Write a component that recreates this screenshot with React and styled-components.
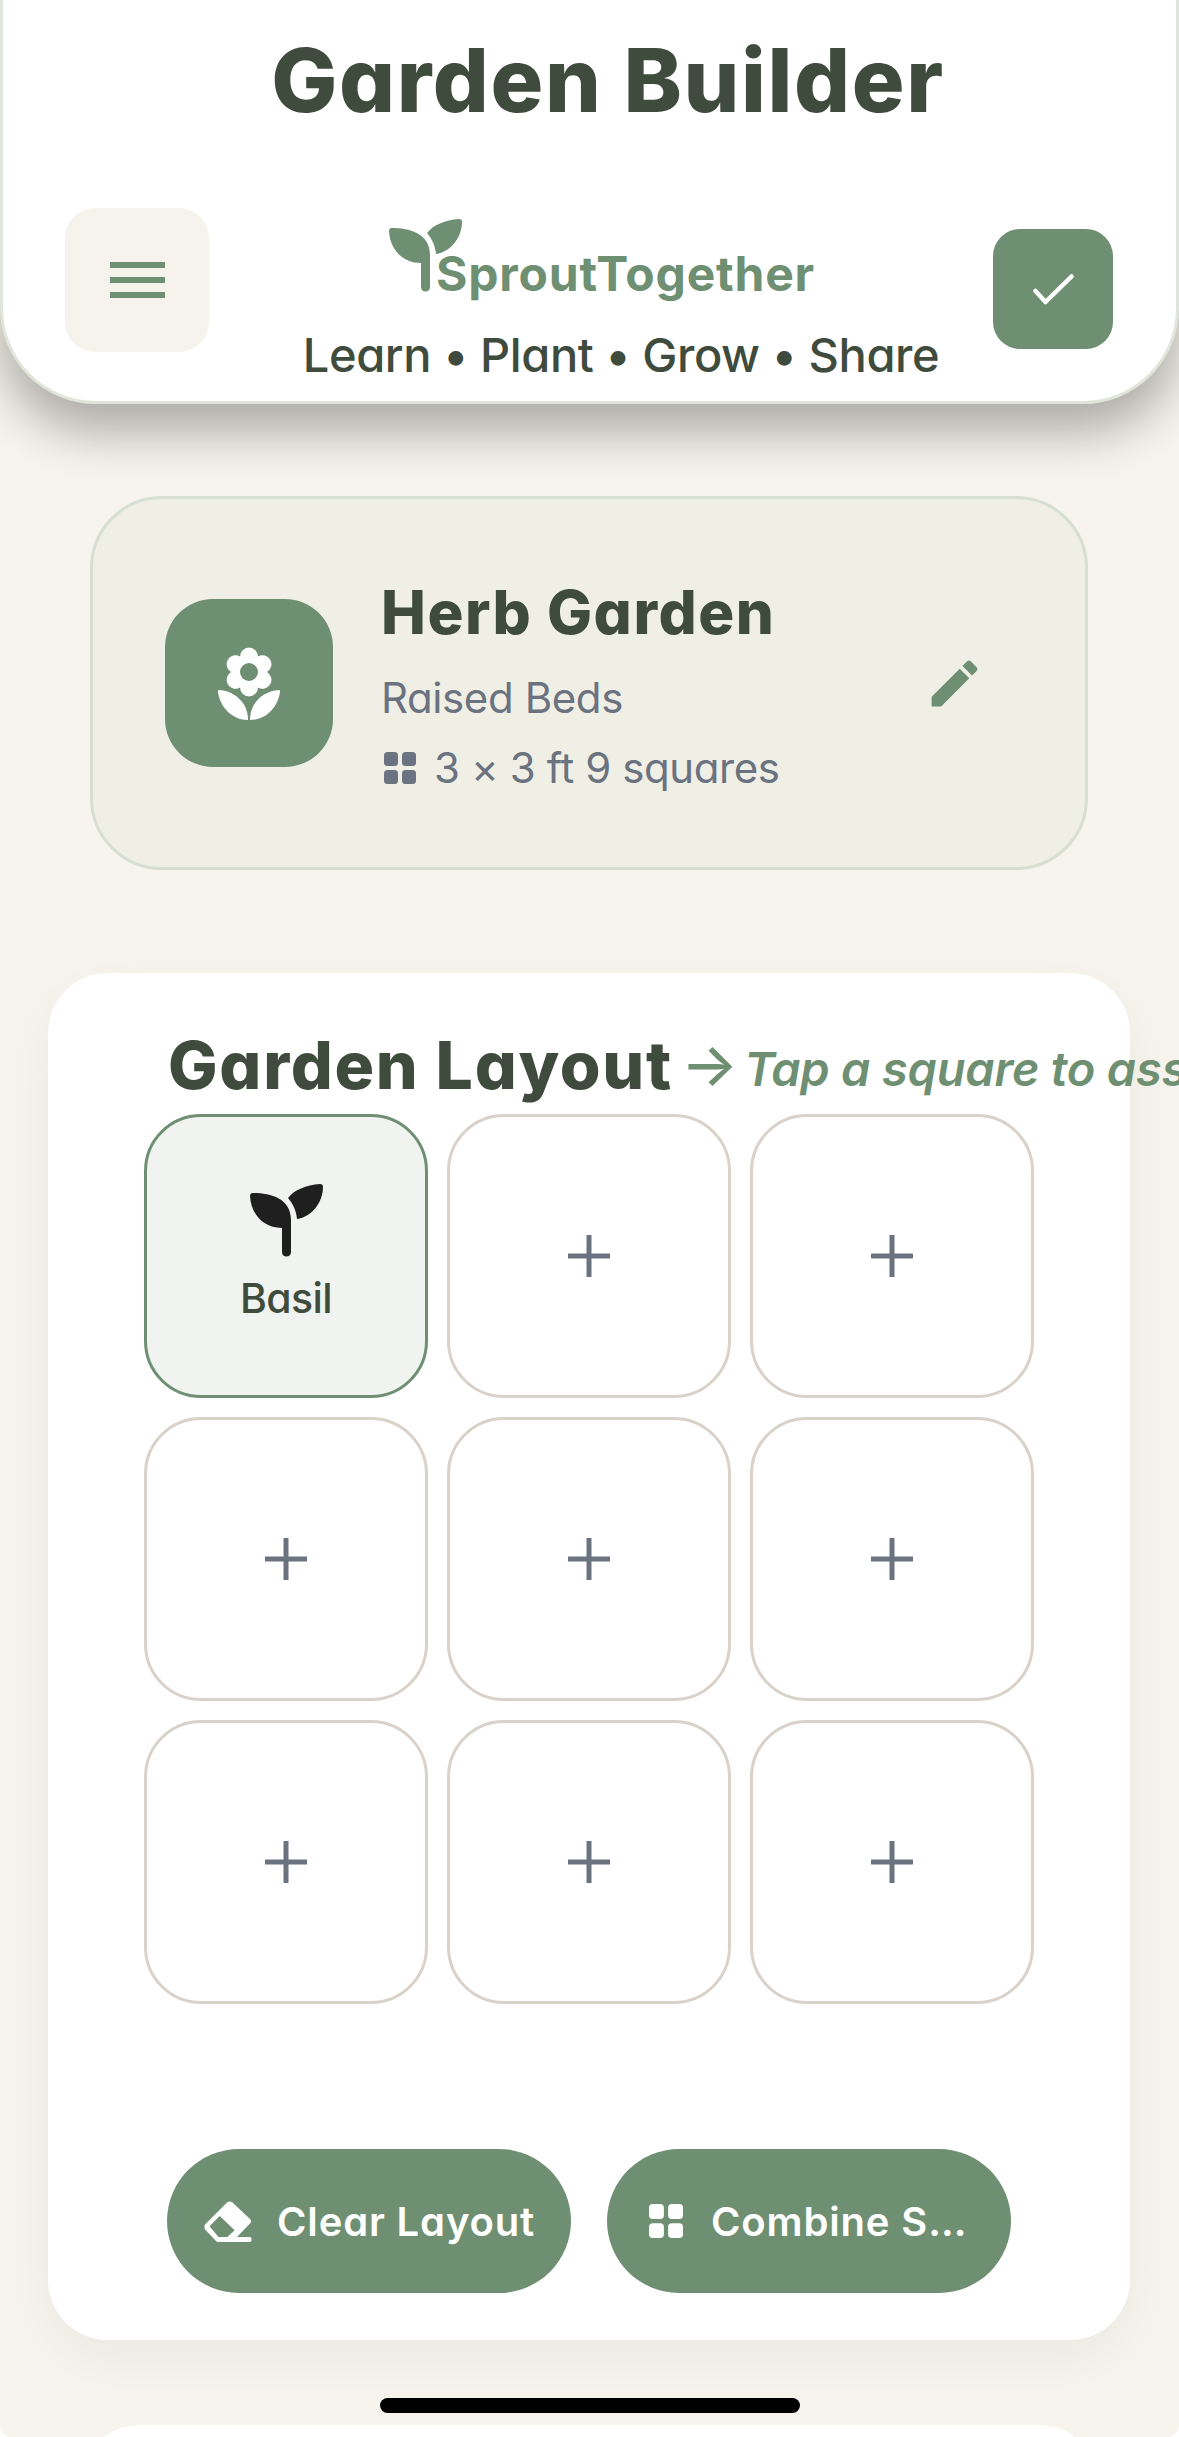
import React from 'react'
import styled, { createGlobalStyle } from 'styled-components'
import { MdEdit } from 'react-icons/md'

const green = '#6f8f72'
const ink = '#3f4b3c'
const grey = '#6b7280'
const paper = '#f7f4ed'

const GlobalStyle = createGlobalStyle`
    html, body {
        margin: 0;
        padding: 0;
        height: 2437px;
        overflow: hidden;
        background: #fff;
    }
    * {
        box-sizing: border-box;
    }
    body {
        font-family: Inter, "Open Sans", sans-serif;
        font-feature-settings: "cv11" 1;
    }
`

const Page = styled.div`
    position: relative;
    width: 1179px;
    height: 2437px;
    overflow: hidden;
    background: ${paper};
    border-radius: 0 0 12px 12px;
`

const Header = styled.header`
    height: 404px;
    background: #fff;
    border: 3px solid #dfe6d9;
    border-top: 0;
    border-radius: 0 0 96px 96px;
    box-shadow: 0 28px 50px rgba(0, 0, 0, 0.3);
    padding: 30px 63px 0 62px;
`

const Title = styled.h1`
    margin: 0;
    height: 100px;
    padding-left: 38px;
    font-size: 88px;
    line-height: 100px;
    font-weight: 800;
    letter-spacing: 1.6px;
    text-align: center;
    white-space: nowrap;
    color: ${ink};
`

const HeaderRow = styled.div`
    display: flex;
    justify-content: space-between;
    align-items: flex-start;
    margin-top: 78px;
`

const MenuButton = styled.button`
    width: 144px;
    height: 144px;
    border: 0;
    border-radius: 30px;
    background: #f6f3ec;
    display: flex;
    flex-direction: column;
    align-items: center;
    justify-content: center;
    gap: 9px;
    padding: 0;
`

const MenuLine = styled.span`
    display: block;
    width: 55px;
    height: 6px;
    background: ${green};
`

const CheckButton = styled.button`
    width: 120px;
    height: 120px;
    margin-top: 21px;
    border: 0;
    border-radius: 27px;
    background: ${green};
    display: flex;
    align-items: center;
    justify-content: center;
    padding: 0;
`

const Brand = styled.div`
    display: flex;
    flex-direction: column;
    align-items: center;
    margin: 11px 0 0 40px;
`

const Logo = styled.div`
    display: flex;
    align-items: flex-start;
    height: 82px;
    margin-right: 38px;
`

const LogoText = styled.span`
    margin: 27px 0 0 -26px;
    font-size: 48px;
    line-height: 56px;
    font-weight: 700;
    letter-spacing: 0.8px;
    color: ${green};
`

const Tagline = styled.div`
    margin-top: 26px;
    font-size: 47px;
    line-height: 56px;
    font-weight: 500;
    letter-spacing: -0.4px;
    white-space: nowrap;
    color: ${ink};
`

const GardenCard = styled.section`
    display: flex;
    align-items: center;
    margin: 92px 91px 0 90px;
    height: 374px;
    padding: 0 72px;
    background: #efefe6;
    border: 3px solid #d7dfd0;
    border-radius: 72px;
`

const IconTile = styled.div`
    flex: none;
    width: 168px;
    height: 168px;
    border-radius: 48px;
    background: ${green};
    display: flex;
    align-items: center;
    justify-content: center;
`

const CardText = styled.div`
    flex: 1;
    margin: 13px 0 0 48px;
`

const CardName = styled.h2`
    margin: 0 0 15px;
    font-size: 60px;
    line-height: 72px;
    font-weight: 800;
    letter-spacing: 1.5px;
    color: ${ink};
`

const CardMeta = styled.div`
    display: flex;
    align-items: center;
    gap: 18px;
    font-size: 42px;
    line-height: 70px;
    letter-spacing: -0.4px;
    color: ${grey};
`

const MetaIcon = styled.span`
    display: flex;
    margin-left: 3px;
`

const EditIcon = styled(MdEdit)`
    flex: none;
    margin-right: 28px;
    color: ${green};
`

const LayoutPanel = styled.section`
    margin: 103px 49px 0 48px;
    height: 1367px;
    padding: 48px 0 0 96px;
    background: #fff;
    border-radius: 60px;
    box-shadow: 0 18px 60px rgba(0, 0, 0, 0.05);
`

const PanelHead = styled.div`
    display: flex;
    align-items: baseline;
    gap: 8px;
    margin-left: 24px;
    height: 93px;
    white-space: nowrap;
`

const PanelTitle = styled.h2`
    margin: 0;
    font-size: 66px;
    line-height: 88px;
    font-weight: 800;
    letter-spacing: 1.7px;
    color: ${ink};
`

const PanelHint = styled.span`
    position: relative;
    top: -3px;
    font-size: 47px;
    font-style: italic;
    font-weight: 600;
    letter-spacing: -0.2px;
    color: ${green};
`

const HintArrow = styled.span`
    margin-right: 6px;
    font-size: 60px;
    line-height: 0;
    font-style: normal;
    font-weight: 500;
`

const SquareGrid = styled.div`
    display: grid;
    grid-template-columns: repeat(3, 284px);
    grid-auto-rows: 284px;
    gap: 19px;
`

const Square = styled.div`
    display: flex;
    flex-direction: column;
    align-items: center;
    justify-content: center;
    padding-bottom: ${p => (p.$filled ? '7px' : '0')};
    border-radius: 57px;
    border: 3px solid ${p => (p.$filled ? green : '#d8d2ca')};
    background: ${p => (p.$filled ? '#f0f3ef' : '#fff')};
`

const PlantName = styled.span`
    margin-top: 18px;
    font-size: 41px;
    line-height: 46px;
    font-weight: 500;
    letter-spacing: -0.6px;
    color: ${ink};
`

const Actions = styled.div`
    display: flex;
    gap: 36px;
    margin: 145px 0 0 23px;
`

const ActionButton = styled.button`
    width: 404px;
    height: 144px;
    padding: 0 30px 0 34px;
    border: 0;
    border-radius: 72px;
    background: ${green};
    color: #fff;
    display: flex;
    align-items: center;
    gap: 22px;
    font-family: inherit;
    font-feature-settings: inherit;
    font-size: 40px;
    font-weight: 600;
    letter-spacing: 0.85px;
`

const CombineButton = styled(ActionButton)`
    padding: 0 40px 0 32px;
    gap: 18px;
`

const ActionIcon = styled.span`
    flex: none;
    width: 54px;
    height: 54px;
    display: flex;
    align-items: center;
    justify-content: center;
`

const ActionLabel = styled.span`
    min-width: 0;
    overflow: hidden;
    text-overflow: ellipsis;
    white-space: nowrap;
`

const NextPanel = styled.section`
    margin: 85px 80px 0;
    height: 200px;
    background: #fff;
    border-radius: 60px;
`

const HomeBar = styled.div`
    position: absolute;
    left: 380px;
    bottom: 24px;
    width: 420px;
    height: 15px;
    border-radius: 8px;
    background: #000;
`

// filled sprout shape, used for the logo and the planted square
function Sprout({ color }) {
    return (
        <svg width="73" height="73" viewBox="0 0 73 73" fill={color}>
            <path d="M3 9C1 9 0 10 0 12 1 30 13 44 32 44V68C32 74 41 74 41 68V36C41 14 20 9 3 9Z" />
            <path d="M38 14C44 6 56 1 70 0 72 0 73 1 73 3 73 18 62 33 47 35 46 26 43 20 38 14Z" />
        </svg>
    )
}

function FlowerIcon() {
    const petals = [0, 60, 120, 180, 240, 300]
    return (
        <svg width="62" height="73" viewBox="0 0 62 73" fill="#fff">
            <circle cx="31" cy="25" r="16" />
            {petals.map(angle => (
                <circle key={angle} cx="31" cy="9.5" r="9" transform={`rotate(${angle} 31 25)`} />
            ))}
            <circle cx="31" cy="25" r="9" fill={green} />
            <path d="M1 43C16 44 30 55 30 73 14 73 2 60 0 45 0 44 0 43 1 43Z" />
            <path d="M61 43C46 44 32 55 32 73 48 73 60 60 62 45 62 44 62 43 61 43Z" />
        </svg>
    )
}

function SquaresIcon({ size }) {
    return (
        <svg width={size} height={size} viewBox="0 0 32 32" fill="currentColor">
            <rect x="0" y="0" width="14" height="14" rx="3.5" />
            <rect x="18" y="0" width="14" height="14" rx="3.5" />
            <rect x="0" y="18" width="14" height="14" rx="3.5" />
            <rect x="18" y="18" width="14" height="14" rx="3.5" />
        </svg>
    )
}

function PlusIcon() {
    return (
        <svg width="42" height="42" viewBox="0 0 42 42" fill={grey}>
            <rect x="18.5" y="0" width="5" height="42" />
            <rect x="0" y="18.5" width="42" height="5" />
        </svg>
    )
}

function EraserIcon() {
    return (
        <svg width="48" height="41" viewBox="0 0 48 41" fill="#fff">
            <path
                fillRule="evenodd"
                d="M23 1.5C24.5 0 27 0 28.5 1.5L46 18C47.5 19.5 47.5 21 46 22.5L33 36H46C48 36 48 41 46 41H15C13.5 41 12.5 40.5 11.5 39.5L1.5 29C0 27.5 0 24.5 1.5 23ZM5.5 25.3 14.5 36H23.3L30.7 29.3 15.7 15Z"
            />
        </svg>
    )
}

function App() {
    const squares = ['Basil', '', '', '', '', '', '', '', '']

    return (
        <Page>
            <GlobalStyle />
            <Header>
                <Title>Garden Builder</Title>
                <HeaderRow>
                    <MenuButton aria-label="Menu">
                        <MenuLine />
                        <MenuLine />
                        <MenuLine />
                    </MenuButton>
                    <Brand>
                        <Logo>
                            <Sprout color={green} />
                            <LogoText>SproutTogether</LogoText>
                        </Logo>
                        <Tagline>Learn • Plant • Grow • Share</Tagline>
                    </Brand>
                    <CheckButton aria-label="Save">
                        <svg width="41" height="31" viewBox="0 0 41 31" fill="none" stroke="#fff" strokeWidth="4.5" strokeLinecap="round" strokeLinejoin="round">
                            <path d="M2.5 17 12.5 28 38.5 2.5" />
                        </svg>
                    </CheckButton>
                </HeaderRow>
            </Header>

            <GardenCard>
                <IconTile>
                    <FlowerIcon />
                </IconTile>
                <CardText>
                    <CardName>Herb Garden</CardName>
                    <CardMeta>Raised Beds</CardMeta>
                    <CardMeta>
                        <MetaIcon>
                            <SquaresIcon size={32} />
                        </MetaIcon>
                        3 × 3 ft 9 squares
                    </CardMeta>
                </CardText>
                <EditIcon size={61} />
            </GardenCard>

            <LayoutPanel>
                <PanelHead>
                    <PanelTitle>Garden Layout</PanelTitle>
                    <PanelHint>
                        <HintArrow>→</HintArrow>
                        Tap a square to assign a plant
                    </PanelHint>
                </PanelHead>
                <SquareGrid>
                    {squares.map((plant, index) => (
                        <Square key={index} $filled={!!plant}>
                            {plant ? (
                                <>
                                    <Sprout color="#1f1f1f" />
                                    <PlantName>{plant}</PlantName>
                                </>
                            ) : (
                                <PlusIcon />
                            )}
                        </Square>
                    ))}
                </SquareGrid>
                <Actions>
                    <ActionButton>
                        <ActionIcon>
                            <EraserIcon />
                        </ActionIcon>
                        <ActionLabel>Clear Layout</ActionLabel>
                    </ActionButton>
                    <CombineButton>
                        <ActionIcon>
                            <SquaresIcon size={34} />
                        </ActionIcon>
                        <ActionLabel>Combine Squares</ActionLabel>
                    </CombineButton>
                </Actions>
            </LayoutPanel>

            <NextPanel />
            <HomeBar />
        </Page>
    )
}

export default App
